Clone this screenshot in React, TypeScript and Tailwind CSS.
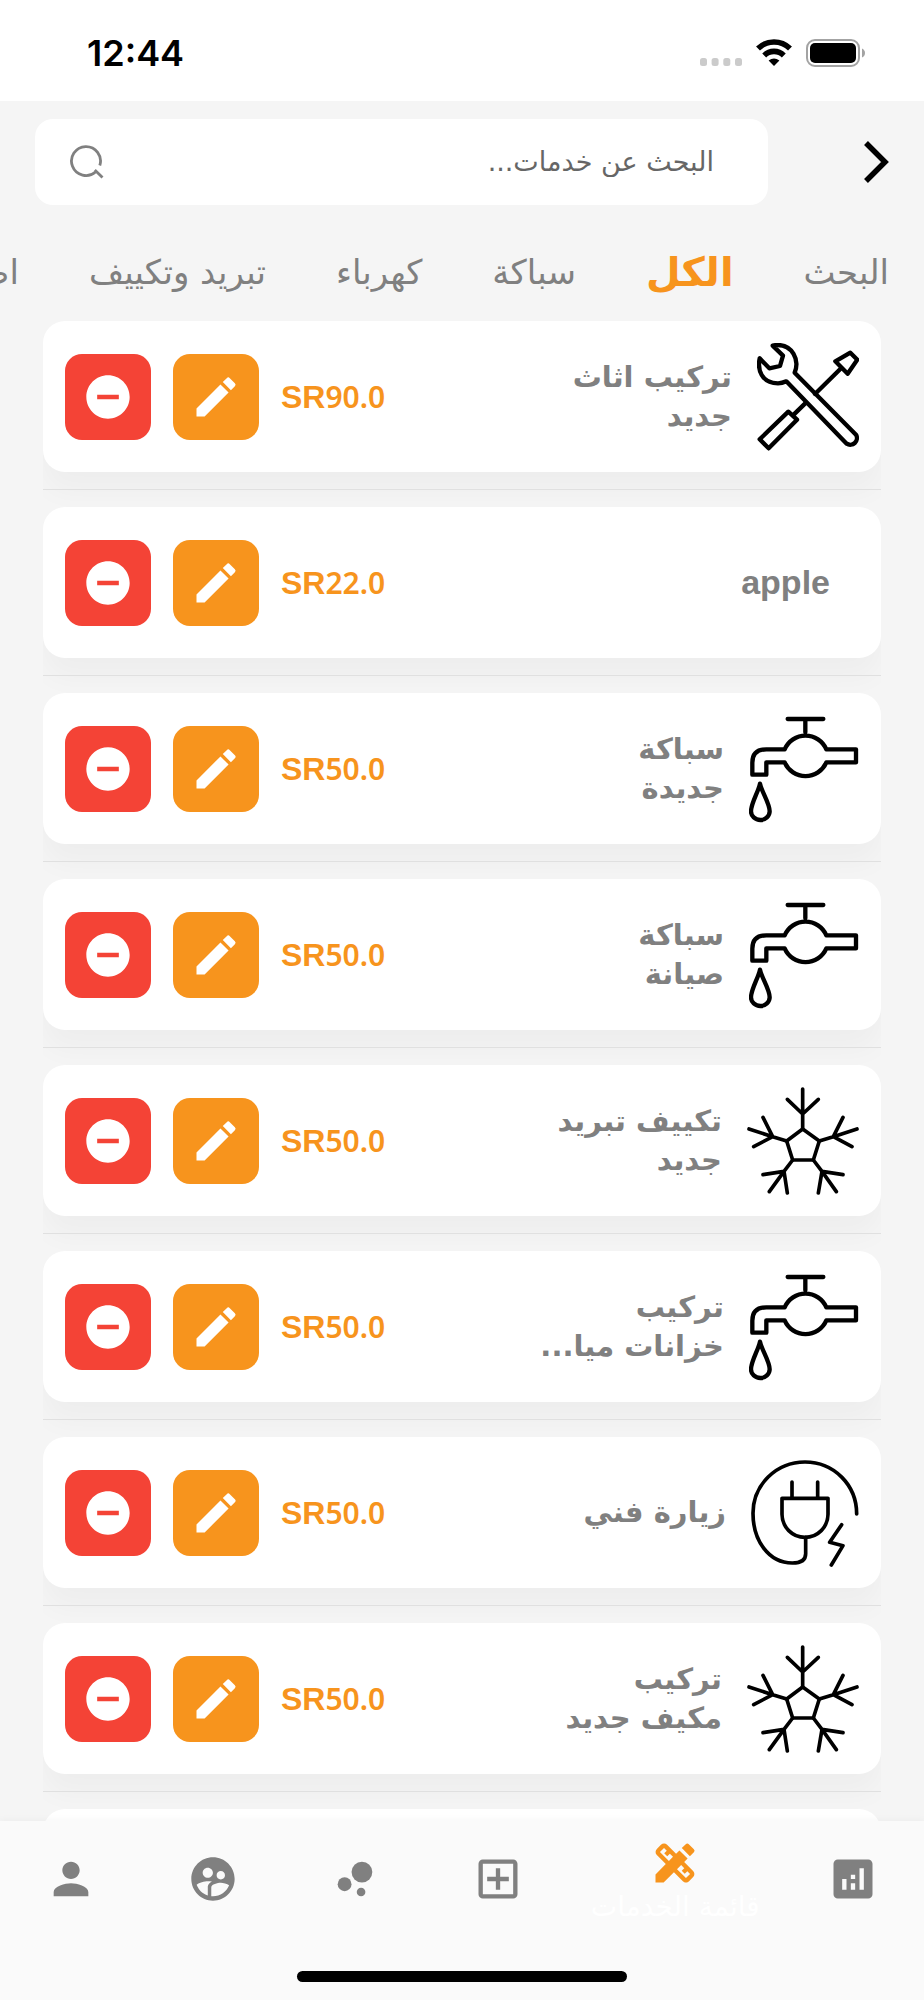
import { useState } from 'react';
import {
  MdAnalytics,
  MdBubbleChart,
  MdDesignServices,
  MdEdit,
  MdOutlineAddBox,
  MdPerson,
  MdRemoveCircle,
  MdSupervisedUserCircle,
} from 'react-icons/md';

type IconName = 'tools' | 'faucet' | 'snow' | 'plug';

interface Service {
  id: number;
  lines: string[];
  price: string;
  icon?: IconName;
}

const categories = ['البحث', 'الكل', 'سباكة', 'كهرباء', 'تبريد وتكييف', 'اصباغ'];

const services: Service[] = [
  { id: 1, lines: ['تركيب اثاث', 'جديد'], price: '90.0', icon: 'tools' },
  { id: 2, lines: ['apple'], price: '22.0' },
  { id: 3, lines: ['سباكة', 'جديدة'], price: '50.0', icon: 'faucet' },
  { id: 4, lines: ['سباكة', 'صيانة'], price: '50.0', icon: 'faucet' },
  { id: 5, lines: ['تكييف تبريد', 'جديد'], price: '50.0', icon: 'snow' },
  { id: 6, lines: ['تركيب', 'خزانات ميا...'], price: '50.0', icon: 'faucet' },
  { id: 7, lines: ['زيارة فني'], price: '50.0', icon: 'plug' },
  { id: 8, lines: ['تركيب', 'مكيف جديد'], price: '50.0', icon: 'snow' },
];

const navItems = [
  { id: 'stats', Icon: MdAnalytics },
  { id: 'services', Icon: MdDesignServices, label: 'قائمة الخدمات' },
  { id: 'add', Icon: MdOutlineAddBox },
  { id: 'bubbles', Icon: MdBubbleChart },
  { id: 'users', Icon: MdSupervisedUserCircle },
  { id: 'profile', Icon: MdPerson },
];

function ServiceIcon({ name }: { name: IconName }) {
  const common = { fill: 'none', stroke: '#000', strokeLinejoin: 'round', strokeLinecap: 'round' } as const;

  if (name === 'tools') {
    return (
      <svg className="h-[108px] w-[102px] shrink-0" viewBox="883 101 306 324" strokeWidth="13" {...common}>
        <path d="M930 109L961 139L952 170L920 177L891 147C884 180 896 222 946 222Q958 222 971 216L1152 403A20 20 0 0 0 1180 376L996 190C1012 150 988 107 945 107Q937 107 930 109Z" />
        <path d="M1118 156L1163 130L1184 151L1155 193ZM1136 176L1057 254M1030 280L990 319M977 307L1003 331L918 417L891 390Z" />
      </svg>
    );
  }

  if (name === 'faucet') {
    return (
      <svg className="h-[108px] w-[110px] shrink-0" viewBox="627 73 330 324" strokeWidth="13" {...common}>
        <path d="M743 85H850M796 85V125" />
        <path d="M734 176A68 68 0 0 1 859 176H948V215H859A68 68 0 0 1 734 215H679V252H637V216Q637 176 679 176Z" />
        <path d="M660 279C655 304 633 338 633 362A28 26 0 0 0 689 362C689 338 665 304 660 279Z" />
      </svg>
    );
  }

  if (name === 'snow') {
    return (
      <svg className="h-[108px] w-[112px] shrink-0" viewBox="621 49 336 324" strokeWidth="11" {...common}>
        <path d="M788 175L838 211L820 268H758L740 211Z" />
        <path d="M788 55V175M742 86L788 130L835 86" />
        <path d="M838 211L880 198L951 175M909 140L880 198L936 228" />
        <path d="M740 211L698 198L627 175M669 140L698 198L641 228" />
        <path d="M820 268L846 302L889 363M909 312L846 302L835 367" />
        <path d="M758 268L732 302L688 363M669 312L732 302L742 367" />
      </svg>
    );
  }

  return (
    <svg className="h-[108px] w-[108px] shrink-0" viewBox="633 82 324 324" strokeWidth="11" {...common}>
      <path d="M950 247C950 160 882 91 795 91C708 91 639 160 639 245C639 325 685 394 757 394Q797 394 797 366V317" />
      <path d="M726 200H864V248A69 69 0 0 1 726 248ZM756 151V200M833 151V200" />
      <path d="M905 279L869 332L909 342L874 400" />
    </svg>
  );
}

function StatusBar() {
  return (
    <div dir="ltr" className="flex h-[101px] shrink-0 items-center justify-between bg-white pt-1 pr-[59px] pl-[87px]">
      <span className="font-['Inter',sans-serif] text-[36px] font-semibold text-black">12:44</span>
      <div className="flex items-center gap-3.5">
        <svg className="h-7 w-[42px]" viewBox="0 0 42 28" fill="#cbcbcb">
          <rect x="0" y="19" width="7" height="8" rx="2.5" />
          <rect x="11.6" y="19" width="7" height="8" rx="2.5" />
          <rect x="23.3" y="19" width="7" height="8" rx="2.5" />
          <rect x="35" y="19" width="7" height="8" rx="2.5" />
        </svg>
        <svg className="h-7 w-9" viewBox="0 0 36 28" fill="none" stroke="#000" strokeWidth="5.6">
          <path d="M2 9.5A23 23 0 0 1 34 9.5" />
          <path d="M8.2 16.4A14 14 0 0 1 27.8 16.4" />
          <path d="M18 27L12.6 21.6Q18 17.2 23.4 21.6Z" fill="#000" stroke="none" />
        </svg>
        <svg className="h-7 w-[59px]" viewBox="0 0 59 28">
          <rect x="1" y="1" width="52" height="26" rx="8" fill="none" stroke="#a3a3a3" strokeWidth="2" />
          <rect x="4" y="4" width="46" height="20" rx="5" fill="#000" />
          <path d="M56 9.5Q59 11 59 14Q59 17 56 18.5Z" fill="#a3a3a3" />
        </svg>
      </div>
    </div>
  );
}

function ServiceCard({ service }: { service: Service }) {
  return (
    <div className="flex h-[151px] items-center rounded-[22px] bg-white px-[22px] shadow-[0_20px_28px_rgba(0,0,0,0.03)]">
      {service.icon && <ServiceIcon name={service.icon} />}
      <h2 className="ms-[25px] flex-1 text-[29px] leading-[39px] font-bold whitespace-nowrap text-[#808080]">
        {service.lines.map((line) => (
          <span key={line} className={service.icon ? 'block' : "ms-1 block font-['Liberation_Sans',sans-serif] text-[34px]"}>
            {line}
          </span>
        ))}
      </h2>
      <div className="flex items-center gap-[22px]">
        <p dir="ltr" className="w-[120px] font-['Liberation_Sans',sans-serif] text-[32px] font-bold text-[#f7941d]">
          SR<span className="font-['Noto_Sans',sans-serif] text-[30px] font-semibold">{service.price}</span>
        </p>
        <button type="button" aria-label="تعديل" className="flex size-[86px] items-center justify-center rounded-[17px] bg-[#f7941d] text-white">
          <MdEdit size={52} />
        </button>
        <button type="button" aria-label="حذف" className="flex size-[86px] items-center justify-center rounded-[17px] bg-[#f44336] text-white">
          <MdRemoveCircle size={52} />
        </button>
      </div>
    </div>
  );
}

export default function App() {
  const [query, setQuery] = useState('');
  const [category, setCategory] = useState('الكل');
  const [activeNav, setActiveNav] = useState('services');

  return (
    <div dir="rtl" className="flex h-screen flex-col overflow-hidden bg-[#f5f5f5] font-['DejaVu_Sans',sans-serif]">
      <StatusBar />

      <header className="flex shrink-0 items-center justify-between px-[35px] pt-[18px]">
        <button type="button" aria-label="رجوع" className="text-black">
          <svg className="h-11 w-[25px]" viewBox="0 0 25 44" fill="none" stroke="currentColor" strokeWidth="5.5">
            <path d="M2 3L21 22L2 41" />
          </svg>
        </button>
        <label className="ms-24 flex h-[86px] flex-1 items-center rounded-[18px] bg-white pr-[54px] pl-[35px]">
          <input
            type="text"
            aria-label="البحث"
            value={query}
            onChange={(e) => setQuery(e.target.value)}
            placeholder="البحث عن خدمات..."
            className="min-w-0 flex-1 bg-transparent text-[27px] text-[#666] outline-none placeholder:text-[#666]"
          />
          <svg className="size-[34px] shrink-0" viewBox="0 0 34 34" fill="none" stroke="#808080" strokeWidth="2.8">
            <path d="M29.8 20.5A14.5 14.5 0 1 0 25.5 27M24.8 25L32.5 32.5" />
          </svg>
        </label>
      </header>

      <nav className="flex h-[116px] shrink-0 items-center gap-[70px] overflow-hidden pt-[18px] pr-[35px]">
        {categories.map((name) => (
          <button
            key={name}
            type="button"
            onClick={() => setCategory(name)}
            className={
              name === category
                ? 'shrink-0 text-[40px] leading-[44px] font-bold text-[#f7941d]'
                : 'shrink-0 text-[34px] leading-[44px] text-[#808080]'
            }
          >
            {name}
          </button>
        ))}
      </nav>

      <main className="mx-[43px] min-h-0 flex-1 overflow-hidden">
        <ul>
          {services.map((service) => (
            <li key={service.id}>
              <ServiceCard service={service} />
              <hr className="my-[17px] border-t border-[#e0e0e0]" />
            </li>
          ))}
          <li aria-hidden="true" className="h-[151px] rounded-[22px] bg-white" />
        </ul>
      </main>

      <footer className="relative shrink-0 bg-[#fafafa] shadow-[0_0_8px_rgba(0,0,0,0.05)]">
        <nav className="flex h-[116px]">
          {navItems.map(({ id, Icon, label }) => (
            <button
              key={id}
              type="button"
              onClick={() => setActiveNav(id)}
              className={
                id === activeNav
                  ? 'flex flex-[3] flex-col items-center justify-center pt-1 text-[#f7941d]'
                  : 'flex flex-[2] flex-col items-center justify-center text-[#808080]'
              }
            >
              <Icon size={52} />
              {id === activeNav && label && <span className="text-[28px] leading-9 whitespace-nowrap text-white">{label}</span>}
            </button>
          ))}
        </nav>
        <div className="flex h-[63px] items-end justify-center pb-[18px]">
          <div className="h-[11px] w-[330px] rounded-full bg-black" />
        </div>
      </footer>
    </div>
  );
}
